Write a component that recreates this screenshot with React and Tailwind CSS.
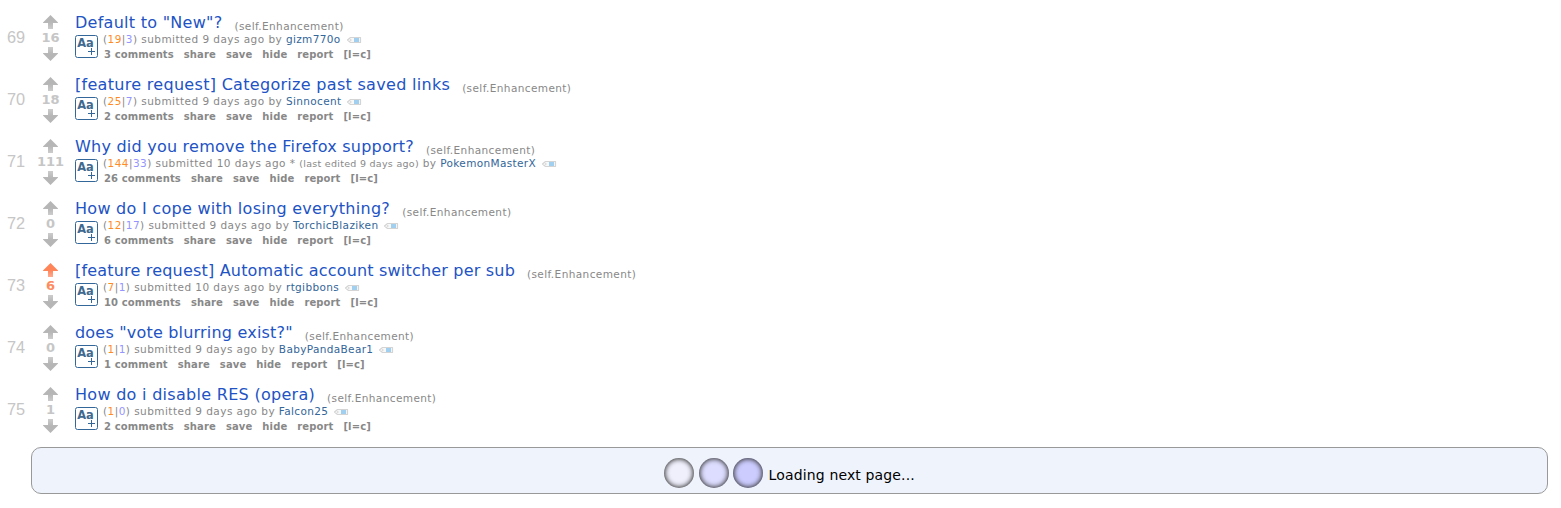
import React from "react";

const posts = [
  { rank: 69, score: 16, title: 'Default to "New"?', spacing: "tracking-[0.27px]", ups: 19, downs: 3, days: 9, author: "gizm770o", comments: "3 comments" },
  { rank: 70, score: 18, title: "[feature request] Categorize past saved links", spacing: "tracking-[0.3px]", ups: 25, downs: 7, days: 9, author: "Sinnocent", comments: "2 comments" },
  { rank: 71, score: 111, title: "Why did you remove the Firefox support?", spacing: "tracking-[0.23px]", ups: 144, downs: 33, days: 10, edited: "(last edited 9 days ago)", author: "PokemonMasterX", comments: "26 comments" },
  { rank: 72, score: 0, title: "How do I cope with losing everything?", spacing: "tracking-[0.28px]", ups: 12, downs: 17, days: 9, author: "TorchicBlaziken", comments: "6 comments" },
  { rank: 73, score: 6, liked: true, title: "[feature request] Automatic account switcher per sub", spacing: "tracking-[0.19px]", ups: 7, downs: 1, days: 10, author: "rtgibbons", comments: "10 comments" },
  { rank: 74, score: 0, title: 'does "vote blurring exist?"', spacing: "tracking-[0.2px]", ups: 1, downs: 1, days: 9, author: "BabyPandaBear1", comments: "1 comment" },
  { rank: 75, score: 1, title: "How do i disable RES (opera)", spacing: "tracking-[0.29px]", ups: 1, downs: 0, days: 9, author: "Falcon25", comments: "2 comments" },
];

function Arrow({ down, liked }) {
  const id = down ? "arrow-down" : liked ? "arrow-liked" : "arrow-up";
  const tip = liked ? "#ff8458" : "#b6b6b6";
  const tail = liked ? "#ffab90" : "#cccccc";
  return (
    <svg width="15" height="14" viewBox="0 0 15 14" className={down ? "block rotate-180" : "block"}>
      <defs>
        <linearGradient id={id} x1="0" y1="0" x2="0" y2="1">
          <stop offset="0.5" stopColor={tip} />
          <stop offset="1" stopColor={tail} />
        </linearGradient>
      </defs>
      <path d="M7.5 0 L15 7.5 V8 H10 V14 H5 V8 H0 V7.5 Z" fill={`url(#${id})`} />
    </svg>
  );
}

function Expando() {
  return (
    <svg width="23" height="23" viewBox="0 0 23 23" className="mt-0.5 block shrink-0">
      <rect x="0.5" y="0.5" width="22" height="22" rx="2" fill="#fff" stroke="#336699" />
      <text x="2.3" y="12" fontFamily="'DejaVu Sans', sans-serif" fontWeight="700" fontSize="12" textLength="16.5" lengthAdjust="spacingAndGlyphs" fill="#41698f">Aa</text>
      <path d="M13 16.5 H20 M16.5 13 V20" stroke="#336699" strokeWidth="1" />
    </svg>
  );
}

function Tag() {
  return (
    <svg width="16" height="8" viewBox="0 0 16 8" className="ml-[5px] block">
      <path d="M4.5 1.5 H14.5 V6.5 H4.5 L1.5 4 Z" fill="#f8f8f8" stroke="#d4d4d4" strokeWidth="1.2" strokeLinejoin="round" />
      <circle cx="4.8" cy="4" r="0.7" fill="#c4c4c4" />
      <rect x="8" y="2" width="5" height="4" fill="#a0cff0" />
    </svg>
  );
}

function Post({ post }) {
  return (
    <div className="flex h-[62px]">
      <div className="w-[25px] pt-[14px] text-right font-['Liberation_Sans',Arial,sans-serif] text-[16.3px] leading-[22px] text-[#c6c6c6]">{post.rank}</div>
      <div className="ml-[10px] flex w-[31px] flex-col items-center pt-[3px]">
        <Arrow liked={post.liked} />
        <div className={post.liked ? "h-[18px] text-[13px] leading-[17px] font-bold text-[#ff8b60]" : "h-[18px] text-[13px] leading-[17px] font-bold text-[#c6c6c6]"}>{post.score}</div>
        <Arrow down />
      </div>
      <div className="ml-[9px]">
        <div className="flex h-[21px] items-baseline whitespace-nowrap">
          <span className={`text-[16px] leading-[22px] text-[#2253c4] ${post.spacing}`}>{post.title}</span>
          <span className="relative top-[2px] ml-[12px] text-[10.5px] leading-[12px] tracking-[0.4px] text-[#888888]">(self.Enhancement)</span>
        </div>
        <div className="flex">
          <Expando />
          <div className="ml-[5px] whitespace-nowrap text-[10px] text-[#888888]">
            <div className="flex h-[14px] items-center">
              <span className="-mt-0.5 text-[10.5px] leading-[14px] tracking-[0.45px]">
                (<span className="text-[#ff8b24]">{post.ups}</span>|<span className="text-[#9494ff]">{post.downs}</span>) submitted {post.days} days ago{post.edited && <span> * <span className="text-[9.5px] tracking-[0.28px]">{post.edited}</span></span>} by <span className="tracking-[0.35px] text-[#336699]">{post.author}</span>
              </span>
              <Tag />
            </div>
            <div className="ml-px flex h-[16px] gap-[10px] leading-[16px] font-bold tracking-[0.11px]">
              {[post.comments, "share", "save", "hide", "report", "[l=c]"].map((label) => (
                <span key={label}>{label}</span>
              ))}
            </div>
          </div>
        </div>
      </div>
    </div>
  );
}

export default function App() {
  return (
    <div className="h-[508px] overflow-hidden bg-white pt-3 font-['DejaVu_Sans',Verdana,sans-serif]">
      {posts.map((post) => (
        <Post key={post.rank} post={post} />
      ))}
      <div className="mt-px mr-[13px] ml-[31px] flex h-[47px] items-center justify-center rounded-[10px] border border-[#999999] bg-[#eff3fc]">
        <div className="mt-1 flex gap-[4.5px]">
          <span className="size-[30px] rounded-full bg-[#eff0fc] shadow-[inset_0_0_5px_1px_#333333]" />
          <span className="size-[30px] rounded-full bg-[#ddddff] shadow-[inset_0_0_5px_1px_#333333]" />
          <span className="size-[30px] rounded-full bg-[#ccccff] shadow-[inset_0_0_5px_1px_#333333]" />
        </div>
        <span className="mt-2.5 ml-[5.5px] text-[14px] tracking-[0.14px] text-black">Loading next page...</span>
      </div>
    </div>
  );
}
